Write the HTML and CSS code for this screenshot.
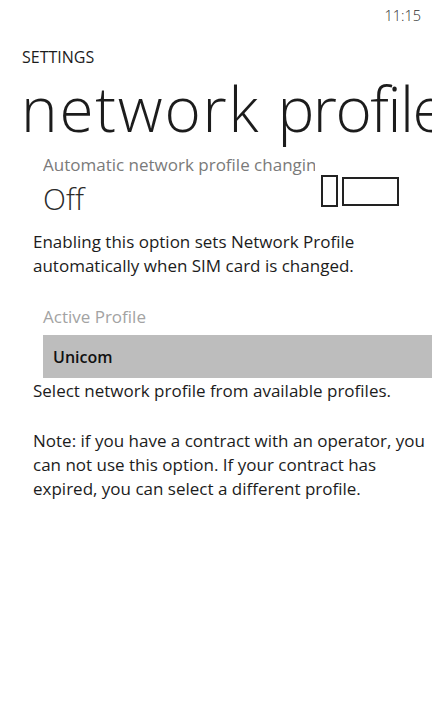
FILE: index.html
```html
<!DOCTYPE html>
<html>
<head>
<meta charset="utf-8">
<link rel="stylesheet" href="styles.css">
</head>
<body>
<div class="phone">
  <div class="status"><span class="time">11:15</span></div>
  <div class="header">
    <div class="app">SETTINGS</div>
    <div class="title"><span class="w1">network</span> <span class="w2">profile</span></div>
  </div>
  <div class="content">
    <div class="toggle-row">
      <div class="toggle-text">
        <div class="label clip">Automatic network profile changing</div>
        <div class="state">Off</div>
      </div>
      <div class="switch">
        <span class="knob"></span>
        <span class="track"></span>
      </div>
    </div>
    <p class="desc first">Enabling this option sets Network Profile automatically when SIM card is changed.</p>
    <div class="label dim">Active Profile</div>
    <div class="picker">Unicom</div>
    <p class="desc tight">Select network profile from available profiles.</p>
    <p class="desc note">Note: if you have a contract with an operator, you can not use this option. If your contract has expired, you can select a different profile.</p>
  </div>
</div>
</body>
</html>
```
FILE: styles.css
```css
html, body {
  margin: 0;
  padding: 0;
  background: #ffffff;
}
body {
  font-family: "Open Sans", "Noto Sans", sans-serif;
  color: #1c1c1c;
}
.phone {
  width: 432px;
  height: 720px;
  overflow: hidden;
}
.status {
  height: 30px;
  display: flex;
  justify-content: flex-end;
  align-items: center;
  padding-right: 11px;
}
.time {
  font-size: 14.5px;
  font-weight: 300;
  color: #2e2e2e;
}
.header {
  padding-left: 22px;
}
.app {
  font-size: 16px;
  line-height: 22px;
  margin-top: 16px;
  color: #1c1c1c;
}
.title {
  font-size: 62px;
  font-weight: 300;
  line-height: 80px;
  white-space: nowrap;
  margin-left: -1px;
  word-spacing: 1px;
  color: #1c1c1c;
}
.w1 {
  letter-spacing: 1.8px;
}
.w2 {
  letter-spacing: -1.5px;
}
.content {
  padding-left: 33px;
}
.toggle-row {
  display: flex;
  align-items: flex-start;
  margin-top: 5px;
}
.toggle-text {
  width: 272px;
  padding-left: 10px;
  margin-right: 2px;
}
.label {
  font-size: 17px;
  line-height: 24px;
  color: #7a7a7a;
  white-space: nowrap;
}
.clip {
  overflow: hidden;
}
.dim {
  color: #a3a3a3;
  padding-left: 10px;
  margin-top: 27px;
}
.state {
  font-size: 30px;
  font-weight: 300;
  line-height: 40px;
  margin-top: 2px;
  color: #2a2a2a;
}
.switch {
  display: flex;
  align-items: center;
  gap: 4px;
  margin-top: 22px;
  margin-left: 4px;
}
.knob {
  width: 17px;
  height: 32px;
  border: 2px solid #222;
  box-sizing: border-box;
}
.track {
  width: 57px;
  height: 29px;
  border: 2px solid #222;
  box-sizing: border-box;
}
.desc {
  font-size: 17px;
  line-height: 24px;
  margin: 0;
  color: #1c1c1c;
}
.first {
  margin-top: 11px;
}
.tight {
  margin-top: 1px;
}
.note {
  margin-top: 26px;
}
.picker {
  margin-top: 6px;
  margin-left: 10px;
  height: 43px;
  background: #bdbdbd;
  display: flex;
  align-items: center;
  padding-left: 10px;
  font-size: 16px;
  font-weight: 600;
  color: #111;
}
```
